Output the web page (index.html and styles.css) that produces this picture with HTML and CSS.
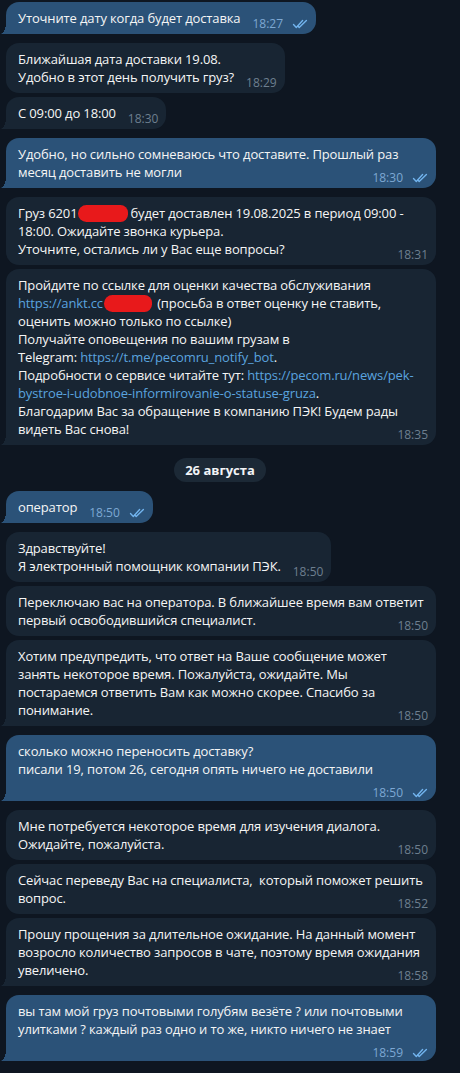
FILE: index.html
```html
<!DOCTYPE html>
<html lang="ru">
<head>
<meta charset="utf-8">
<title>Чат ПЭК</title>
<link rel="stylesheet" href="styles.css">
</head>
<body>
<div class="chat">

  <div class="msg out tail">Уточните дату когда будет доставка<span class="meta"><span class="time">18:27</span><svg class="check" viewBox="0 0 16 10"><path d="M1.5 5.6 L4.3 8.4 L10.6 1.6 M7.2 8.4 L14.4 1.6 M5.6 6.8 L7.2 8.4"/></svg></span></div>

  <div class="msg in">Ближайшая дата доставки 19.08.<br>Удобно в этот день получить груз?<span class="meta"><span class="time">18:29</span></span></div>
  <div class="msg in cont tail">С 09:00 до 18:00<span class="meta"><span class="time">18:30</span></span></div>

  <div class="msg out tail">Удобно, но сильно сомневаюсь что доставите. Прошлый раз месяц доставить не могли<span class="meta"><span class="time">18:30</span><svg class="check" viewBox="0 0 16 10"><path d="M1.5 5.6 L4.3 8.4 L10.6 1.6 M7.2 8.4 L14.4 1.6 M5.6 6.8 L7.2 8.4"/></svg></span></div>

  <div class="msg in">Груз 6201<span class="blot blot-a"></span>будет доставлен 19.08.2025 в период 09:00 - 18:00. Ожидайте звонка курьера.<br>Уточните, остались ли у Вас еще вопросы?<span class="meta"><span class="time">18:31</span></span></div>
  <div class="msg in cont tail">Пройдите по ссылке для оценки качества обслуживания <span class="link">https://ankt.cc</span><span class="blot blot-b"></span> (просьба в ответ оценку не ставить, оценить можно только по ссылке)<br>Получайте оповещения по вашим грузам в<br>Telegram: <span class="link">https://t.me/pecomru_notify_bot</span>.<br>Подробности о сервисе читайте тут: <span class="link">https://pecom.ru/news/pek-bystroe-i-udobnoe-informirovanie-o-statuse-gruza</span>.<br>Благодарим Вас за обращение в компанию ПЭК! Будем рады видеть Вас снова!<span class="meta"><span class="time">18:35</span></span></div>

  <div class="date">26 августа</div>

  <div class="msg out tail">оператор<span class="meta"><span class="time">18:50</span><svg class="check" viewBox="0 0 16 10"><path d="M1.5 5.6 L4.3 8.4 L10.6 1.6 M7.2 8.4 L14.4 1.6 M5.6 6.8 L7.2 8.4"/></svg></span></div>

  <div class="msg in">Здравствуйте!<br>Я электронный помощник компании ПЭК.<span class="meta"><span class="time">18:50</span></span></div>
  <div class="msg in cont">Переключаю вас на оператора. В ближайшее время вам ответит первый освободившийся специалист.<span class="meta"><span class="time">18:50</span></span></div>
  <div class="msg in cont tail">Хотим предупредить, что ответ на Ваше сообщение может занять некоторое время. Пожалуйста, ожидайте. Мы постараемся ответить Вам как можно скорее. Спасибо за понимание.<span class="meta"><span class="time">18:50</span></span></div>

  <div class="msg out tail">сколько можно переносить доставку?<br>писали 19, потом 26, сегодня опять ничего не доставили<span class="meta"><span class="time">18:50</span><svg class="check" viewBox="0 0 16 10"><path d="M1.5 5.6 L4.3 8.4 L10.6 1.6 M7.2 8.4 L14.4 1.6 M5.6 6.8 L7.2 8.4"/></svg></span></div>

  <div class="msg in">Мне потребуется некоторое время для изучения диалога. Ожидайте, пожалуйста.<span class="meta"><span class="time">18:50</span></span></div>
  <div class="msg in cont">Сейчас переведу Вас на специалиста,&nbsp; который поможет решить вопрос.<span class="meta"><span class="time">18:52</span></span></div>
  <div class="msg in cont tail">Прошу прощения за длительное ожидание. На данный момент возросло количество запросов в чате, поэтому время ожидания увеличено.<span class="meta"><span class="time">18:58</span></span></div>

  <div class="msg out tail">вы там мой груз почтовыми голубям везёте ? или почтовыми улитками ? каждый раз одно и то же, никто ничего не знает<span class="meta"><span class="time">18:59</span><svg class="check" viewBox="0 0 16 10"><path d="M1.5 5.6 L4.3 8.4 L10.6 1.6 M7.2 8.4 L14.4 1.6 M5.6 6.8 L7.2 8.4"/></svg></span></div>

</div>
</body>
</html>
```

FILE: styles.css
```css
html, body {
  margin: 0;
  padding: 0;
  background: #0e1621;
}

body {
  font-family: "Open Sans", "Noto Sans", sans-serif;
  font-size: 13px;
  color: #f5f5f5;
}

.chat {
  width: 440px;
  padding-top: 2px;
  display: flex;
  flex-direction: column;
  align-items: flex-start;
}

.msg {
  --bubble: #182533;
  position: relative;
  display: flow-root;
  box-sizing: border-box;
  max-width: 430px;
  margin: 9px 0 0 6px;
  padding: 7px 12px;
  border-radius: 13px;
  background: var(--bubble);
  line-height: 18px;
  letter-spacing: -0.13px;
  word-wrap: break-word;
}

.msg:first-child {
  margin-top: 0;
}

.msg.cont {
  margin-top: 4px;
}

.msg.out {
  --bubble: #2b5278;
}

.msg.tail {
  border-bottom-left-radius: 0;
}

.msg.tail::before {
  content: "";
  position: absolute;
  left: -6px;
  bottom: 0;
  width: 6px;
  height: 11px;
  background: radial-gradient(ellipse 6px 11px at 0 0, transparent 98%, var(--bubble) 100%);
}

.meta {
  float: right;
  display: flex;
  align-items: center;
  gap: 9px;
  height: 14px;
  margin: 8px -4px -6px 12px;
  font-size: 12px;
  line-height: 14px;
  letter-spacing: 0;
  color: #6d7f8f;
}

.out .meta {
  color: #7da8d3;
}

.check {
  width: 16px;
  height: 10px;
  fill: none;
  stroke: #72b4ee;
  stroke-width: 1.4;
  stroke-linecap: round;
  stroke-linejoin: round;
}

.link {
  color: #5aa3df;
}

.blot {
  display: inline-block;
  height: 17px;
  vertical-align: -4px;
  background: #e8191b;
  border-radius: 9px 8px 8px 9px;
}

.blot-a {
  width: 50px;
  margin: 0 2px 0 1px;
}

.blot-b {
  width: 48px;
  margin: 0 2px 0 1px;
}

.date {
  align-self: center;
  margin: 13px 0 0;
  padding: 3px 11px;
  border-radius: 12px;
  background: #1c2936;
  font-weight: 700;
  line-height: 18px;
  color: #f2f4f6;
}

.date + .msg {
  margin-top: 9px;
}
```
